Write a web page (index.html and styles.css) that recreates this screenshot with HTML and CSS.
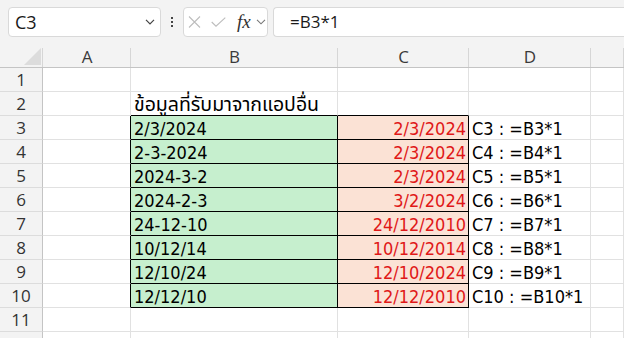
FILE: index.html
```html
<!DOCTYPE html>
<html lang="th">
<head>
  <meta charset="UTF-8">
  <title>Sheet</title>
  <link rel="stylesheet" href="styles.css">
</head>
<body>
  <div class="toolbar">
    <div class="namebox">
      <span>C3</span>
      <svg class="chev" width="10" height="6" viewBox="0 0 10 6"><polyline points="1,0.8 5,4.8 9,0.8" fill="none" stroke="#444" stroke-width="1.2"/></svg>
    </div>
    <div class="grip"><i></i><i></i><i></i></div>
    <div class="fxbox">
      <svg class="cancel" width="13" height="12" viewBox="0 0 13 12"><path d="M1 0.5 L12 11.5 M12 0.5 L1 11.5" stroke="#bdbdbd" stroke-width="1.1" fill="none"/></svg>
      <svg class="enter" width="15" height="10" viewBox="0 0 15 10"><polyline points="0.7,5 5,9.2 14.3,0.6" fill="none" stroke="#bdbdbd" stroke-width="1.1"/></svg>
      <span class="fx">fx</span>
      <svg class="chev" width="10" height="6" viewBox="0 0 10 6"><polyline points="1,0.8 5,4.8 9,0.8" fill="none" stroke="#777" stroke-width="1.1"/></svg>
    </div>
    <div class="formula">=B3*1</div>
  </div>

  <div class="sheet">
    <!-- column headers -->
    <div class="corner"><svg width="17" height="17" viewBox="0 0 17 17"><polygon points="17,0 17,17 0,17" fill="#dcdcdc"/></svg></div>
    <div class="colhead">A</div>
    <div class="colhead">B</div>
    <div class="colhead">C</div>
    <div class="colhead">D</div>
    <div class="colhead"></div>

    <!-- row 1 -->
    <div class="rowhead">1</div>
    <div class="cell"></div><div class="cell"></div><div class="cell"></div><div class="cell"></div><div class="cell"></div>

    <!-- row 2 -->
    <div class="rowhead">2</div>
    <div class="cell"></div>
    <div class="cell bt"><span class="thai">ข้อมูลที่รับมาจากแอปอื่น</span></div>
    <div class="cell bt"></div>
    <div class="cell"></div><div class="cell"></div>

    <!-- rows 3-10 -->
    <div class="rowhead">3</div>
    <div class="cell bl"></div>
    <div class="cell box raw">2/3/2024</div>
    <div class="cell box date">2/3/2024</div>
    <div class="cell">C3 : =B3*1</div>
    <div class="cell"></div>

    <div class="rowhead">4</div>
    <div class="cell bl"></div>
    <div class="cell box raw">2-3-2024</div>
    <div class="cell box date">2/3/2024</div>
    <div class="cell">C4 : =B4*1</div>
    <div class="cell"></div>

    <div class="rowhead">5</div>
    <div class="cell bl"></div>
    <div class="cell box raw">2024-3-2</div>
    <div class="cell box date">2/3/2024</div>
    <div class="cell">C5 : =B5*1</div>
    <div class="cell"></div>

    <div class="rowhead">6</div>
    <div class="cell bl"></div>
    <div class="cell box raw">2024-2-3</div>
    <div class="cell box date">3/2/2024</div>
    <div class="cell">C6 : =B6*1</div>
    <div class="cell"></div>

    <div class="rowhead">7</div>
    <div class="cell bl"></div>
    <div class="cell box raw">24-12-10</div>
    <div class="cell box date">24/12/2010</div>
    <div class="cell">C7 : =B7*1</div>
    <div class="cell"></div>

    <div class="rowhead">8</div>
    <div class="cell bl"></div>
    <div class="cell box raw">10/12/14</div>
    <div class="cell box date">10/12/2014</div>
    <div class="cell">C8 : =B8*1</div>
    <div class="cell"></div>

    <div class="rowhead">9</div>
    <div class="cell bl"></div>
    <div class="cell box raw">12/10/24</div>
    <div class="cell box date">12/10/2024</div>
    <div class="cell">C9 : =B9*1</div>
    <div class="cell"></div>

    <div class="rowhead">10</div>
    <div class="cell bl"></div>
    <div class="cell box raw">12/12/10</div>
    <div class="cell box date">12/12/2010</div>
    <div class="cell">C10 : =B10*1</div>
    <div class="cell"></div>

    <!-- rows 11-12 -->
    <div class="rowhead">11</div>
    <div class="cell"></div><div class="cell"></div><div class="cell"></div><div class="cell"></div><div class="cell"></div>

    <div class="rowhead">12</div>
    <div class="cell"></div><div class="cell"></div><div class="cell"></div><div class="cell"></div><div class="cell"></div>
  </div>
</body>
</html>
```

FILE: styles.css
```css
:root {
  --cols: 43px 88px 207px 131px 122px 1fr;
}
body {
  margin: 0;
  width: 624px;
  height: 338px;
  overflow: hidden;
  background: #fff;
  font-family: "Open Sans", "Noto Sans", sans-serif;
  color: #222;
}

/* formula bar */
.toolbar {
  display: flex;
  align-items: flex-start;
  height: 44px;
  box-sizing: border-box;
  padding: 7px 0 0 8px;
  background: #f3f3f3;
}
.namebox {
  box-sizing: border-box;
  width: 153px;
  height: 30px;
  display: flex;
  align-items: center;
  justify-content: space-between;
  padding: 0 5px 0 6px;
  background: #fff;
  border: 1px solid #d9d9d9;
  border-radius: 4px;
  font-size: 18px;
  color: #1a1a1a;
}
.grip {
  display: flex;
  flex-direction: column;
  gap: 2px;
  margin: 10px 10px 0 10px;
}
.grip i {
  display: block;
  width: 2px;
  height: 2px;
  background: #444;
}
.fxbox {
  box-sizing: border-box;
  width: 85px;
  height: 30px;
  display: flex;
  align-items: center;
  padding-left: 4px;
  background: #fff;
  border: 1px solid #d9d9d9;
  border-radius: 4px;
}
.enter {
  margin-left: 10px;
}
.fx {
  margin-left: 11px;
  font-family: "Liberation Serif", serif;
  font-style: italic;
  font-size: 19px;
  color: #333;
  line-height: 28px;
}
.fxbox .chev {
  margin-left: 5px;
}
.formula {
  flex: 1;
  box-sizing: border-box;
  height: 30px;
  margin-left: 5px;
  padding-left: 16px;
  background: #fff;
  border: 1px solid #d9d9d9;
  border-right: 0;
  border-radius: 4px 0 0 4px;
  font-size: 17px;
  line-height: 28px;
  color: #1a1a1a;
}

/* sheet grid */
.sheet {
  display: grid;
  grid-template-columns: var(--cols);
  grid-auto-rows: 24px;
}
.corner,
.colhead {
  box-sizing: border-box;
  border-bottom: 1px solid #c4c4c4;
  background: linear-gradient(#d6d6d6, #d6d6d6) right bottom / 1px 19px no-repeat, #f3f3f3;
}
.corner {
  display: flex;
  align-items: flex-end;
  justify-content: flex-end;
  padding: 0 2px 2px 0;
}
.colhead {
  text-align: center;
  font-size: 17px;
  line-height: 26px;
  color: #3a3a3a;
}
.rowhead {
  box-sizing: border-box;
  background: #f3f3f3;
  border-right: 1px solid #c4c4c4;
  border-bottom: 1px solid #dcdcdc;
  text-align: center;
  font-size: 17px;
  line-height: 24px;
  color: #333;
}
.cell {
  box-sizing: border-box;
  display: flex;
  align-items: flex-end;
  padding: 0 3px;
  border-right: 1px solid #e1e1e1;
  border-bottom: 1px solid #e1e1e1;
  white-space: nowrap;
  font-family: "DejaVu Sans Condensed", "DejaVu Sans", "Noto Sans Thai", "Loma", sans-serif;
  font-size: 18px;
  line-height: 21px;
  color: #000;
}
.thai {
  font-size: 19.5px;
  line-height: 21px;
}
.box {
  border-right-color: #000;
  border-bottom-color: #000;
}
.bl {
  border-right-color: #000;
}
.bt {
  border-bottom-color: #000;
}
.raw {
  background: #c6efce;
}
.date {
  background: #fbe2d5;
  justify-content: flex-end;
  padding-right: 2px;
  color: #e01818;
}
```
